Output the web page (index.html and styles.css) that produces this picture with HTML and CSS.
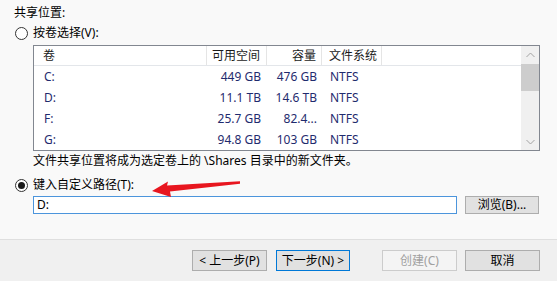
FILE: index.html
```html
<!DOCTYPE html>
<html>
<head>
<meta charset="utf-8">
<link rel="stylesheet" href="styles.css">
</head>
<body>
<div class="page">
  <div class="content">
    <div class="title">共享位置:</div>
    <div class="radio-row"><span class="radio"></span><span>按卷选择(V):</span></div>
    <div class="list">
      <div class="table">
        <div class="row head">
          <div class="cell c1">卷</div>
          <div class="cell num">可用空间</div>
          <div class="cell num n2">容量</div>
          <div class="cell c4">文件系统</div>
          <div class="cell last"></div>
        </div>
        <div class="row">
          <div class="cell c1">C:</div><div class="cell num">449 GB</div><div class="cell num n2">476 GB</div><div class="cell c4">NTFS</div><div class="cell last"></div>
        </div>
        <div class="row">
          <div class="cell c1">D:</div><div class="cell num">11.1 TB</div><div class="cell num n2">14.6 TB</div><div class="cell c4">NTFS</div><div class="cell last"></div>
        </div>
        <div class="row">
          <div class="cell c1">F:</div><div class="cell num">25.7 GB</div><div class="cell num n2">82.4...</div><div class="cell c4">NTFS</div><div class="cell last"></div>
        </div>
        <div class="row">
          <div class="cell c1">G:</div><div class="cell num">94.8 GB</div><div class="cell num n2">103 GB</div><div class="cell c4">NTFS</div><div class="cell last"></div>
        </div>
      </div>
      <div class="scrollbar">
        <div class="sb-btn"><svg width="9" height="6" viewBox="0 0 9 6"><path d="M0.5 5 L4.5 1 L8.5 5" fill="none" stroke="#a3a3a3" stroke-width="1"/></svg></div>
        <div class="thumb"></div>
        <div class="sb-fill"></div>
        <div class="sb-btn"><svg width="9" height="6" viewBox="0 0 9 6"><path d="M0.5 1 L4.5 5 L8.5 1" fill="none" stroke="#a3a3a3" stroke-width="1"/></svg></div>
      </div>
    </div>
    <div class="desc">文件共享位置将成为选定卷上的 \Shares 目录中的新文件夹。</div>
    <div class="radio-row second"><span class="radio checked"></span><span>键入自定义路径(T):</span></div>
    <div class="path-row">
      <div class="input">D:</div>
      <div class="btn browse">浏览(B)...</div>
    </div>
  </div>
  <div class="footer">
    <div class="btn">&lt; 上一步(P)</div>
    <div class="btn default">下一步(N) &gt;</div>
    <div class="btn disabled">创建(C)</div>
    <div class="btn">取消</div>
  </div>
  <svg class="arrow" width="110" height="35" viewBox="0 0 110 35">
    <polygon points="12,21 28,11.5 27,15.5 100,11.3 100,13.7 30,21.5 31,27" fill="#e8161f"/>
  </svg>
</div>
</body>
</html>
```

FILE: styles.css
```css
html, body {
  margin: 0;
  padding: 0;
}
body {
  font-family: "Noto Sans", "Noto Sans CJK SC", sans-serif;
  font-size: 12px;
  line-height: 16px;
  color: #000;
  background: #f0f0f0;
}
.page {
  position: relative;
  width: 557px;
  height: 281px;
  overflow: hidden;
}
.content {
  height: 240px;
  box-sizing: border-box;
  padding: 5px 0 0 14px;
  background: #f9f9f9;
  border-bottom: 1px solid #dfdfdf;
}
.title {
  height: 16px;
}
.radio-row {
  display: flex;
  align-items: center;
  height: 16px;
  margin-top: 4px;
  gap: 5px;
}
.radio-row.second {
  margin-top: 8px;
}
.radio {
  width: 13px;
  height: 13px;
  box-sizing: border-box;
  border: 1px solid #333;
  border-radius: 50%;
  background: #fff;
  margin-left: 1px;
  display: flex;
  align-items: center;
  justify-content: center;
}
.radio.checked::after {
  content: "";
  width: 7px;
  height: 7px;
  border-radius: 50%;
  background: #1a1a1a;
}
.list {
  margin: 4px 0 0 19px;
  width: 507px;
  height: 106px;
  box-sizing: border-box;
  border: 1px solid #828790;
  background: #fff;
  display: flex;
  overflow: hidden;
}
.table {
  flex: 1;
  overflow: hidden;
}
.row {
  display: grid;
  grid-template-columns: 173px 60px 55px 60px 1fr;
  height: 21px;
  align-items: center;
  color: #1f2b6e;
}
.row.head {
  height: 19px;
  border-bottom: 1px solid #e3e6ea;
  color: #1a1a1a;
  align-items: stretch;
}
.cell {
  white-space: nowrap;
  overflow: hidden;
  box-sizing: border-box;
  padding-left: 10px;
}
.head .cell {
  border-right: 1px solid #e5e5e5;
  display: flex;
  align-items: center;
  padding-left: 9px;
}
.head .cell.last {
  border-right: none;
}
.cell.num {
  text-align: right;
  padding-left: 0;
  padding-right: 6px;
}
.head .cell.num {
  justify-content: flex-end;
  padding-left: 0;
}
.cell.n2 {
  padding-right: 5px;
}
.cell.c4 {
  padding-left: 8px;
}
.head .cell.c4 {
  padding-left: 7px;
}
.scrollbar {
  width: 18px;
  background: #f0f0f0;
  display: flex;
  flex-direction: column;
}
.sb-btn {
  height: 17px;
  display: flex;
  align-items: center;
  justify-content: center;
}
.thumb {
  margin-top: 1px;
  height: 27px;
  background: #cdcdcd;
}
.sb-fill {
  flex: 1;
}
.desc {
  margin: 2px 0 0 19px;
  height: 16px;
}
.path-row {
  display: flex;
  margin: 3px 0 0 19px;
  gap: 8px;
}
.input {
  width: 424px;
  height: 18px;
  box-sizing: border-box;
  border: 1px solid #4c95dc;
  background: #fff;
  padding-left: 3px;
  line-height: 16px;
}
.btn {
  width: 75px;
  height: 21px;
  box-sizing: border-box;
  border: 1px solid #adadad;
  background: #e1e1e1;
  display: flex;
  align-items: center;
  justify-content: center;
}
.btn.browse {
  height: 18px;
  width: 74px;
}
.btn.default {
  border-color: #0078d7;
  width: 74px;
  margin-left: 9px;
}
.btn.disabled {
  background: #f4f4f4;
  border-color: #cccccc;
  color: #a0a0a0;
  margin-left: 32px;
}
.btn.disabled + .btn {
  margin-left: 8px;
}
.footer {
  display: flex;
  justify-content: flex-end;
  padding: 10px 17px 0 0;
}
.arrow {
  position: absolute;
  left: 140px;
  top: 170px;
}
```
